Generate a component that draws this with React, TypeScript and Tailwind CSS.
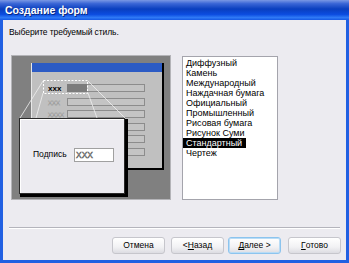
import React from 'react'

const STYLES = [
  'Диффузный',
  'Камень',
  'Международный',
  'Наждачная бумага',
  'Официальный',
  'Промышленный',
  'Рисовая бумага',
  'Рисунок Суми',
  'Стандартный',
  'Чертеж',
]

const SELECTED = 'Стандартный'

// row positions inside the little preview form
const ROWS = [
  { y: 33, label: 'xxx' },
  { y: 47, label: 'xxx' },
  { y: 59, label: 'xxxx' },
  { y: 72, label: '' },
  { y: 84, label: '' },
  { y: 97, label: '' },
]

function Preview() {
  return (
    <svg width="160" height="145" viewBox="0 0 160 145" className="block shrink-0">
      {/* sunken frame */}
      <rect x="0" y="0" width="160" height="145" fill="#808080" />
      <rect x="0.5" y="0.5" width="159" height="144" fill="none" stroke="#b4b4b8" />

      {/* form window */}
      <rect x="20" y="8" width="133" height="107" fill="#000" />
      <rect x="20" y="8" width="131" height="105" fill="#c0c0c0" />
      <line x1="20.5" y1="8" x2="20.5" y2="113" stroke="#e8e8e8" />
      <rect x="21" y="8" width="130" height="9" fill="#2c5bc4" />

      {ROWS.map((r, i) => (
        <g key={i}>
          {r.label && (
            <text
              x="37"
              y={r.y + 3}
              fontSize="8"
              fontWeight={i === 0 ? 700 : 400}
              fill={i === 0 ? '#000' : '#f4f4f4'}
              stroke={i === 0 ? 'none' : '#8a8a8a'}
              strokeWidth={i === 0 ? 0 : 0.4}
              fontFamily="Liberation Sans, sans-serif"
            >
              {r.label}
            </text>
          )}
          <rect x="56.5" y={r.y - 3.5} width="77" height="7" fill="#c4c4c4" stroke="#8c8c8c" />
          {i === 0 && <rect x="56" y={r.y - 4} width="20" height="8" fill="#7c7c7c" />}
        </g>
      ))}

      {/* selection marquee */}
      <rect x="32.5" y="25.5" width="44" height="13" fill="none" stroke="#ffffff" strokeDasharray="2 1.5" />

      {/* zoom lines */}
      <g stroke="#f0f0f0" strokeWidth="0.8">
        <line x1="32" y1="26" x2="9" y2="63" />
        <line x1="32" y1="38" x2="25" y2="63" />
        <line x1="77" y1="26" x2="114" y2="63" />
        <line x1="77" y1="38" x2="86" y2="63" />
      </g>

      {/* zoomed popup */}
      <rect x="9" y="64" width="108" height="78" fill="#000" />
      <rect x="8" y="63" width="106" height="76" fill="#2a2a2a" />
      <rect x="9" y="64" width="104" height="74" fill="#ffffff" />
      <rect x="10" y="65" width="103" height="73" fill="#ecebf0" />
      <text x="22" y="102" fontSize="8.5" fill="#000" fontFamily="Liberation Sans, sans-serif">
        Подпись
      </text>
      <rect x="63.5" y="93.5" width="39" height="13" fill="#ffffff" stroke="#a0a0a0" />
      <text
        x="65"
        y="103"
        fontSize="8.5"
        fill="#ffffff"
        stroke="#555"
        strokeWidth="0.5"
        fontFamily="Liberation Sans, sans-serif"
      >
        XXX
      </text>
    </svg>
  )
}

function Button({ label, u, rest, focused }: { label?: string; u?: string; rest?: string; focused?: boolean }) {
  return (
    <button
      className={`w-[53px] h-[17px] rounded-[3px] border text-[8.5px] leading-none text-black flex items-center justify-center bg-[linear-gradient(to_bottom,#ffffff,#f2f2f4_60%,#dcdce2)] ${
        focused ? 'border-[#8cc4ee] shadow-[inset_0_0_0_1px_#b8dcf6]' : 'border-[#c6c6cc]'
      }`}
    >
      {label}
      {u && <span className="underline">{u}</span>}
      {rest}
    </button>
  )
}

export default function App() {
  return (
    <div className="w-[349px] h-[263px] flex flex-col bg-[#2160e2] font-['Liberation_Sans',sans-serif] overflow-hidden">
      <div className="h-[20px] shrink-0 flex items-center pl-[5px] bg-[linear-gradient(to_bottom,#7a98e4_0%,#3a66d6_18%,#0a3fbe_45%,#0b4ce0_72%,#2f7af6_88%,#1458e6_100%)]">
        <span className="text-white font-bold text-[10.5px] leading-none [text-shadow:1px_1px_0_#0a2a80]">
          Создание форм
        </span>
      </div>

      <div className="flex-1 mx-[3px] mb-[3px] bg-[#ecebf0] flex flex-col">
        <p className="pt-[6px] pl-[6px] text-[8.5px] leading-[12px] tracking-[-0.1px] text-black">
          Выберите требуемый стиль.
        </p>

        <div className="flex mt-[17px] pl-[8px] gap-[11px]">
          <Preview />
          <ul className="mt-[1px] w-[96px] h-[144px] bg-white border border-[#a4a4ac] pt-[1px]">
            {STYLES.map(s => (
              <li key={s} className="h-[10px] flex items-center">
                <span
                  className={`text-[9px] leading-[10px] pl-[3px] pr-[4px] whitespace-nowrap ${
                    s === SELECTED ? 'bg-black text-white' : 'text-black'
                  }`}
                >
                  {s}
                </span>
              </li>
            ))}
          </ul>
        </div>

        <div className="mt-[27px] ml-[6px] w-[331px] border-t border-b border-t-[#b4b4bc] border-b-white" />

        <div className="mt-[8px] flex justify-end pr-[5px]">
          <Button label="Отмена" />
          <div className="ml-[6px]">
            <Button label="< " u="Н" rest="азад" />
          </div>
          <div className="ml-[4px]">
            <Button u="Д" rest="алее >" focused />
          </div>
          <div className="ml-[7px]">
            <Button u="Г" rest="отово" />
          </div>
        </div>
      </div>
    </div>
  )
}
